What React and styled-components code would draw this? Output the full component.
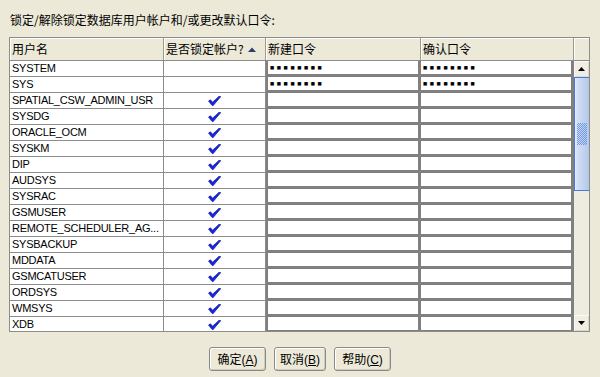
import React from "react";
import styled, { createGlobalStyle } from "styled-components";

const Global = createGlobalStyle`
  html, body {
    margin: 0;
    padding: 0;
    background: #ece9d8;
    font-family: "Liberation Sans", "Noto Sans CJK SC", sans-serif;
    color: #000;
  }
  body { width: 600px; height: 377px; overflow: hidden; }
`;

const Page = styled.div`
  width: 600px;
  height: 377px;
  display: flex;
  flex-direction: column;
  background: #ece9d8;
`;

const Title = styled.div`
  box-sizing: border-box;
  height: 37px;
  padding: 12px 0 0 10px;
  font-family: "Noto Sans CJK SC", sans-serif;
  font-size: 12px;
  line-height: 16px;
  white-space: nowrap;
`;

const Grid = styled.div`
  box-sizing: border-box;
  margin-left: 9px;
  width: 581px;
  height: 295px;
  border: 1px solid #8c8c8c;
  display: flex;
  flex-direction: column;
  background: #fff;
`;

const HeaderRow = styled.div`
  display: flex;
  height: 23px;
  box-sizing: border-box;
  border-bottom: 1px solid #8c8c8c;
  background: #ece9d8;
`;

const HeadCell = styled.div`
  box-sizing: border-box;
  width: ${(p) => p.$w}px;
  flex: none;
  display: flex;
  align-items: center;
  gap: 4px;
  padding-left: 2px;
  border-right: 1px solid #9d9a8c;
  box-shadow: inset 1px 1px 0 #fff;
  font-family: "Noto Sans CJK SC", sans-serif;
  font-size: 12px;
  line-height: 22px;
  white-space: nowrap;
`;

const HeadCorner = styled.div`
  flex: 1;
  box-shadow: inset 1px 1px 0 #fff;
`;

const BodyArea = styled.div`
  display: flex;
  height: 270px;
`;

const Rows = styled.div`
  width: 564px;
  height: 270px;
  overflow: hidden;
  display: flex;
  flex-direction: column;
  flex: none;
`;

const Row = styled.div`
  display: flex;
  height: 16px;
  flex: none;
`;

const NameCell = styled.div`
  box-sizing: border-box;
  width: 154px;
  flex: none;
  padding-left: 2px;
  border-right: 1px solid #8c8c8c;
  border-bottom: 1px solid #8c8c8c;
  font-family: "Liberation Sans", sans-serif;
  font-size: 11px;
  letter-spacing: -0.25px;
  line-height: 15px;
  white-space: nowrap;
  overflow: hidden;
`;

const LockCell = styled.div`
  box-sizing: border-box;
  width: 102px;
  flex: none;
  display: flex;
  align-items: center;
  justify-content: center;
  border-right: 1px solid #8c8c8c;
  border-bottom: 1px solid #8c8c8c;
`;

const PwCell = styled.div`
  box-sizing: border-box;
  width: ${(p) => (p.$first ? 155 : 153)}px;
  flex: none;
  display: flex;
  align-items: center;
  padding-left: 2px;
  border-left: ${(p) => (p.$first ? "2px solid #808080" : "none")};
  border-right: 3px solid #808080;
  border-bottom: 3px solid #808080;
  background: #fff;
`;

const PwInput = styled.input`
  width: 60px;
  height: 12px;
  border: none;
  outline: none;
  padding: 0;
  margin: 0;
  background: transparent;
  font-family: "DejaVu Sans", sans-serif;
  font-size: 4.5px;
  letter-spacing: 2.55px;
  -webkit-text-security: square;
  color: #000;
`;

const ScrollBar = styled.div`
  width: 15px;
  flex: none;
  display: flex;
  flex-direction: column;
  background: #eeebe0;
`;

const ScrollBtn = styled.div`
  height: 16px;
  flex: none;
  display: flex;
  align-items: center;
  justify-content: center;
  background: #efede4;
  box-shadow: inset 1px 1px 0 #fbfaf6, inset -1px -1px 0 #dcd8c8;
`;

const Track = styled.div`
  flex: 1;
  display: flex;
  flex-direction: column;
  background: #eeebe0;
`;

const Thumb = styled.div`
  box-sizing: border-box;
  height: 114px;
  border: 1px solid #4a78de;
  border-right: none;
  background: linear-gradient(90deg, #eaf0fb 0, #d3e0f5 2px, #c2d3ef 60%, #b3c7ea 100%);
  display: flex;
  align-items: center;
  justify-content: center;
`;

const Grip = styled.div`
  width: 10px;
  height: 22px;
  background: repeating-conic-gradient(#5d8ae6 0 25%, transparent 0 50%) 0 0 / 2px 2px;
  opacity: 0.8;
`;

const ButtonRow = styled.div`
  display: flex;
  justify-content: center;
  gap: 8px;
  margin-top: 15px;
  margin-left: 0;
`;

const Button = styled.button`
  box-sizing: border-box;
  width: ${(p) => p.$w}px;
  height: 24px;
  padding: 0;
  border: 1px solid #8a8a8a;
  border-radius: 3px;
  background: #ece9d8;
  box-shadow: inset 1px 1px 0 #fff, inset -1px -1px 0 #cfcbbb;
  font-family: "Noto Sans CJK SC", sans-serif;
  font-size: 12px;
  line-height: 22px;
  color: #000;
  white-space: nowrap;
`;

const Key = styled.span`
  font-family: "Liberation Sans", sans-serif;
  font-size: 12px;
  text-decoration: underline;
`;

const Paren = styled.span`
  font-family: "Liberation Sans", sans-serif;
  font-size: 12px;
`;

const Check = () => (
  <svg width="13" height="10" viewBox="0 0 13 10">
    <path d="M0.5 5 L2.5 3.8 L4.6 6.2 L11 0.3 L12.8 0.6 L5.2 9.6 L4.1 9.6 Z" fill="#1428e6" stroke="#000a78" strokeWidth="0.6" strokeLinejoin="round" />
  </svg>
);

const SortUp = () => (
  <svg width="8" height="5" viewBox="0 0 8 5">
    <path d="M0 5 L4 0.5 L8 5 Z" fill="#2f3d68" />
  </svg>
);

const ArrowUp = () => (
  <svg width="7" height="4" viewBox="0 0 7 4">
    <path d="M0 4 L3.5 0 L7 4 Z" fill="#000" />
  </svg>
);

const ArrowDown = () => (
  <svg width="7" height="4" viewBox="0 0 7 4">
    <path d="M0 0 L7 0 L3.5 4 Z" fill="#000" />
  </svg>
);

const users = [
  { name: "SYSTEM", locked: false, pw: true },
  { name: "SYS", locked: false, pw: true },
  { name: "SPATIAL_CSW_ADMIN_USR", locked: true },
  { name: "SYSDG", locked: true },
  { name: "ORACLE_OCM", locked: true },
  { name: "SYSKM", locked: true },
  { name: "DIP", locked: true },
  { name: "AUDSYS", locked: true },
  { name: "SYSRAC", locked: true },
  { name: "GSMUSER", locked: true },
  { name: "REMOTE_SCHEDULER_AG...", locked: true },
  { name: "SYSBACKUP", locked: true },
  { name: "MDDATA", locked: true },
  { name: "GSMCATUSER", locked: true },
  { name: "ORDSYS", locked: true },
  { name: "WMSYS", locked: true },
  { name: "XDB", locked: true },
];

export default function App() {
  return (
    <Page>
      <Global />
      <Title>锁定/解除锁定数据库用户帐户和/或更改默认口令:</Title>
      <Grid>
        <HeaderRow>
          <HeadCell $w={154}>用户名</HeadCell>
          <HeadCell $w={102}>
            是否锁定帐户?
            <SortUp />
          </HeadCell>
          <HeadCell $w={155}>新建口令</HeadCell>
          <HeadCell $w={153}>确认口令</HeadCell>
          <HeadCorner />
        </HeaderRow>
        <BodyArea>
          <Rows>
            {users.map((u) => (
              <Row key={u.name}>
                <NameCell>{u.name}</NameCell>
                <LockCell>{u.locked ? <Check /> : null}</LockCell>
                <PwCell $first>
                  {u.pw ? <PwInput type="text" readOnly value="oracle12" /> : null}
                </PwCell>
                <PwCell>
                  {u.pw ? <PwInput type="text" readOnly value="oracle12" /> : null}
                </PwCell>
              </Row>
            ))}
          </Rows>
          <ScrollBar>
            <ScrollBtn>
              <ArrowUp />
            </ScrollBtn>
            <Track>
              <Thumb>
                <Grip />
              </Thumb>
            </Track>
            <ScrollBtn>
              <ArrowDown />
            </ScrollBtn>
          </ScrollBar>
        </BodyArea>
      </Grid>
      <ButtonRow>
        <Button $w={57}>
          确定<Paren>(</Paren><Key>A</Key><Paren>)</Paren>
        </Button>
        <Button $w={52}>
          取消<Paren>(</Paren><Key>B</Key><Paren>)</Paren>
        </Button>
        <Button $w={57}>
          帮助<Paren>(</Paren><Key>C</Key><Paren>)</Paren>
        </Button>
      </ButtonRow>
    </Page>
  );
}
